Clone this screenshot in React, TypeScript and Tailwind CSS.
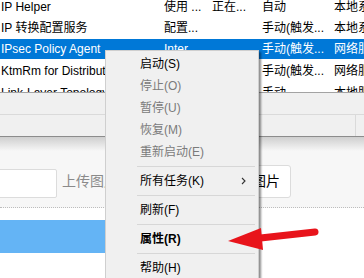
import React from 'react';

const ROWS = [
  { name: 'IP Helper', desc: '使用 ...', status: '正在...', start: '自动', logon: '本地系统', h: 'h-[21px]' },
  { name: 'IP 转换配置服务', desc: '配置...', status: '', start: '手动(触发...', logon: '本地系统', h: 'h-[21px]' },
  { name: 'IPsec Policy Agent', desc: 'Inter', status: '', start: '手动(触发...', logon: '网络服务', h: 'mt-[1px] h-[20px]', selected: true },
  { name: 'KtmRm for Distributed Transaction Coordinator', desc: '', status: '', start: '手动(触发...', logon: '网络服务', h: 'h-[23px]' },
  { name: 'Link-Layer Topology Discovery Mapper', desc: '', status: '', start: '手动', logon: '本地服务', h: 'h-[21px]' },
];

type MenuEntry =
  | { kind: 'item'; label: string; key: string; disabled?: boolean; bold?: boolean; sub?: boolean }
  | { kind: 'sep' };

const MENU: MenuEntry[] = [
  { kind: 'item', label: '启动', key: 'S' },
  { kind: 'item', label: '停止', key: 'O', disabled: true },
  { kind: 'item', label: '暂停', key: 'U', disabled: true },
  { kind: 'item', label: '恢复', key: 'M', disabled: true },
  { kind: 'item', label: '重新启动', key: 'E', disabled: true },
  { kind: 'sep' },
  { kind: 'item', label: '所有任务', key: 'K', sub: true },
  { kind: 'sep' },
  { kind: 'item', label: '刷新', key: 'F' },
  { kind: 'sep' },
  { kind: 'item', label: '属性', key: 'R', bold: true },
  { kind: 'sep' },
  { kind: 'item', label: '帮助', key: 'H' },
];

function ContextMenu() {
  return (
    <div className="absolute left-[105px] top-[50px] h-[240px] w-[154px] border border-[#cfcfcf] bg-[#f0f0f0] pt-[2px] shadow-[2px_2px_2px_rgba(0,0,0,0.45)]">
      {MENU.map((entry, i) =>
        entry.kind === 'sep' ? (
          <div key={i} className="flex h-[7px] items-center">
            <div className="ml-[31px] mr-[3px] h-px flex-1 bg-[#d7d7d7]" />
          </div>
        ) : (
          <div
            key={i}
            className={`flex h-[22px] items-center pl-[34px] pr-[12px] text-[12px] ${
              entry.disabled ? 'text-[#7b7b7b]' : 'text-black'
            } ${entry.bold ? 'font-bold' : ''}`}
          >
            <span>
              {entry.label}({entry.key})
            </span>
            {entry.sub && (
              <svg className="ml-auto" width="5" height="8" viewBox="0 0 5 8">
                <path d="M1 1 L4 4 L1 7" fill="none" stroke="#333" strokeWidth="1.1" />
              </svg>
            )}
          </div>
        ),
      )}
    </div>
  );
}

function Arrow() {
  return (
    <svg className="absolute left-[220px] top-[220px]" width="110" height="40" viewBox="0 0 110 40">
      <line x1="36" y1="18.5" x2="95" y2="12" stroke="#e8141b" strokeWidth="7" strokeLinecap="round" />
      <polygon points="8,21 41,8 43,30" fill="#e8141b" />
    </svg>
  );
}

export default function App() {
  return (
    <div
      className="relative h-[278px] w-[364px] overflow-hidden bg-white"
      style={{ fontFamily: '"Liberation Sans", "Noto Sans CJK SC", sans-serif' }}
    >
      {/* services list */}
      <div className="h-[92px] overflow-hidden text-[12px]">
        <div className="-mt-[4px] flex flex-col">
          {ROWS.map((row) => (
            <div
              key={row.name}
              className={`flex items-center whitespace-nowrap ${row.h} ${
                row.selected ? 'bg-[#0078d7] text-white' : 'text-black'
              }`}
            >
              <span className="w-[164px] shrink-0 overflow-hidden pl-[1px]">{row.name}</span>
              <span className="w-[48px] shrink-0 overflow-hidden">{row.desc}</span>
              <span className="w-[50px] shrink-0 overflow-hidden">{row.status}</span>
              <span className="w-[72px] shrink-0 overflow-hidden">{row.start}</span>
              <span className="shrink-0">{row.logon}</span>
            </div>
          ))}
        </div>
      </div>

      {/* console chrome */}
      <div className="h-px bg-[#a3a3a3]" />
      <div className="h-[21px] bg-[#f0f0f0]" />
      <div className="h-px bg-[#dadada]" />
      <div className="flex h-[21px] justify-end bg-[#f0f0f0]">
        <div className="mr-[8px] w-px bg-[#dadada]" />
      </div>
      <div className="h-px bg-[#8c8c8c]" />

      {/* web page below */}
      <div className="bg-[#f7f7f7]">
        <div className="h-[14px] bg-gradient-to-b from-[#cfcfcf] to-[#f7f7f7]" />
        <div className="flex items-end pt-[14px]">
          <div className="-ml-[10px] h-[29px] w-[67px] rounded-[2px] border border-[#dcdcdc] bg-white" />
          <span className="ml-[5px] self-center text-[14px] text-[#8a8a8a]">上传图片</span>
          <button className="ml-auto mr-[73px] h-[33px] w-[80px] rounded-[3px] border border-[#dcdcdc] bg-white pr-[10px] text-right text-[14px] text-black">
            选择图片
          </button>
        </div>
        <div className="mt-[9px] border-t border-dotted border-[#bdbdbd]" />
      </div>
      <div className="bg-white pt-[12px]">
        <div className="h-[33px] w-[200px] bg-[#64b4f5]" />
      </div>

      <ContextMenu />
      <Arrow />
    </div>
  );
}
